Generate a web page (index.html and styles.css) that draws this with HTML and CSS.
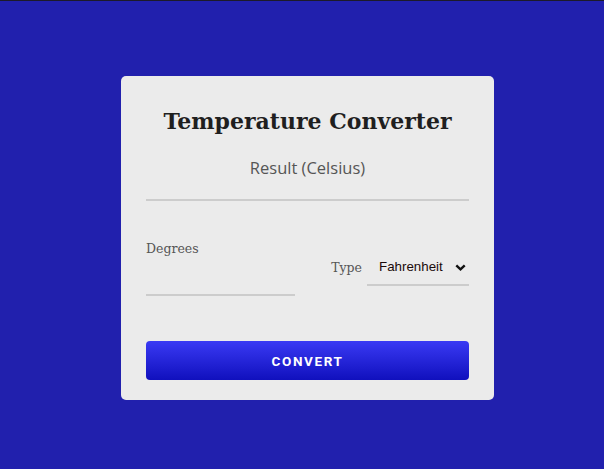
FILE: index.html
```html
<!DOCTYPE html>
<html lang="en">
<head>
<meta charset="utf-8">
<title>Temperature Converter</title>
<link rel="stylesheet" href="styles.css">
</head>
<body>
<main class="card">
  <h1 class="title">Temperature Converter</h1>
  <div class="result">Result (Celsius)</div>
  <div class="row">
    <div class="field">
      <label class="label" for="deg">Degrees</label>
      <input class="input" id="deg" type="text">
    </div>
    <div class="type-group">
      <label class="label type-label" for="type">Type</label>
      <span class="select-wrap">
        <select class="select" id="type">
          <option>Fahrenheit</option>
          <option>Celsius</option>
        </select>
        <svg class="chevron" width="11" height="7" viewBox="0 0 11 7"><path d="M1.3 1.3 L5.5 5.3 L9.7 1.3" fill="none" stroke="#111" stroke-width="2.4"/></svg>
      </span>
    </div>
  </div>
  <button class="button" type="button">CONVERT</button>
</main>
</body>
</html>
```
FILE: styles.css
```css
html, body {
  margin: 0;
  padding: 0;
}
body {
  background: #2120ad;
  border-top: 1px solid #1c1a2a;
  min-height: 468px;
  display: flex;
  justify-content: center;
  align-items: flex-start;
  padding-top: 75px;
  padding-left: 11px;
  box-sizing: border-box;
}
.card {
  width: 373px;
  box-sizing: border-box;
  background: #ebebeb;
  border-radius: 5px;
  padding: 24px 25px 20px;
  display: flex;
  flex-direction: column;
}
.title {
  margin: 0;
  font-family: "DejaVu Serif", serif;
  font-weight: bold;
  font-size: 22px;
  line-height: 42px;
  color: #1f1f1f;
  text-align: center;
}
.result {
  margin-top: 14px;
  font-family: "Open Sans", sans-serif;
  font-size: 16.5px;
  line-height: 24px;
  color: #555;
  text-align: center;
  padding-bottom: 19px;
  border-bottom: 2px solid #cccccc;
}
.row {
  margin-top: 38px;
  display: flex;
  justify-content: space-between;
  align-items: center;
}
.field {
  display: flex;
  flex-direction: column;
  width: 149px;
}
.label {
  font-family: "DejaVu Serif", serif;
  font-size: 12.5px;
  line-height: 20px;
  color: #555;
}
.input {
  height: 37px;
  box-sizing: border-box;
  border: none;
  border-bottom: 2px solid #cccccc;
  background: transparent;
  outline: none;
  padding: 0;
}
.type-group {
  display: flex;
  align-items: center;
  gap: 5px;
}
.select-wrap {
  position: relative;
  display: block;
}
.select {
  appearance: none;
  -webkit-appearance: none;
  width: 102px;
  height: 36px;
  box-sizing: border-box;
  border: none;
  border-bottom: 2px solid #cccccc;
  border-radius: 0;
  background: transparent;
  font-family: "Liberation Sans", Arial, sans-serif;
  font-size: 13.333px;
  color: #1a0a0a;
  padding: 0 0 0 12px;
  outline: none;
}
.chevron {
  position: absolute;
  right: 3px;
  top: 14px;
  pointer-events: none;
}
.button {
  margin-top: 45px;
  height: 39px;
  border: none;
  border-radius: 4px;
  background: linear-gradient(#3a3af4, #1010bd);
  color: #fff;
  font-family: Roboto, sans-serif;
  font-weight: bold;
  font-size: 13.5px;
  letter-spacing: 1.6px;
  cursor: pointer;
}
```
